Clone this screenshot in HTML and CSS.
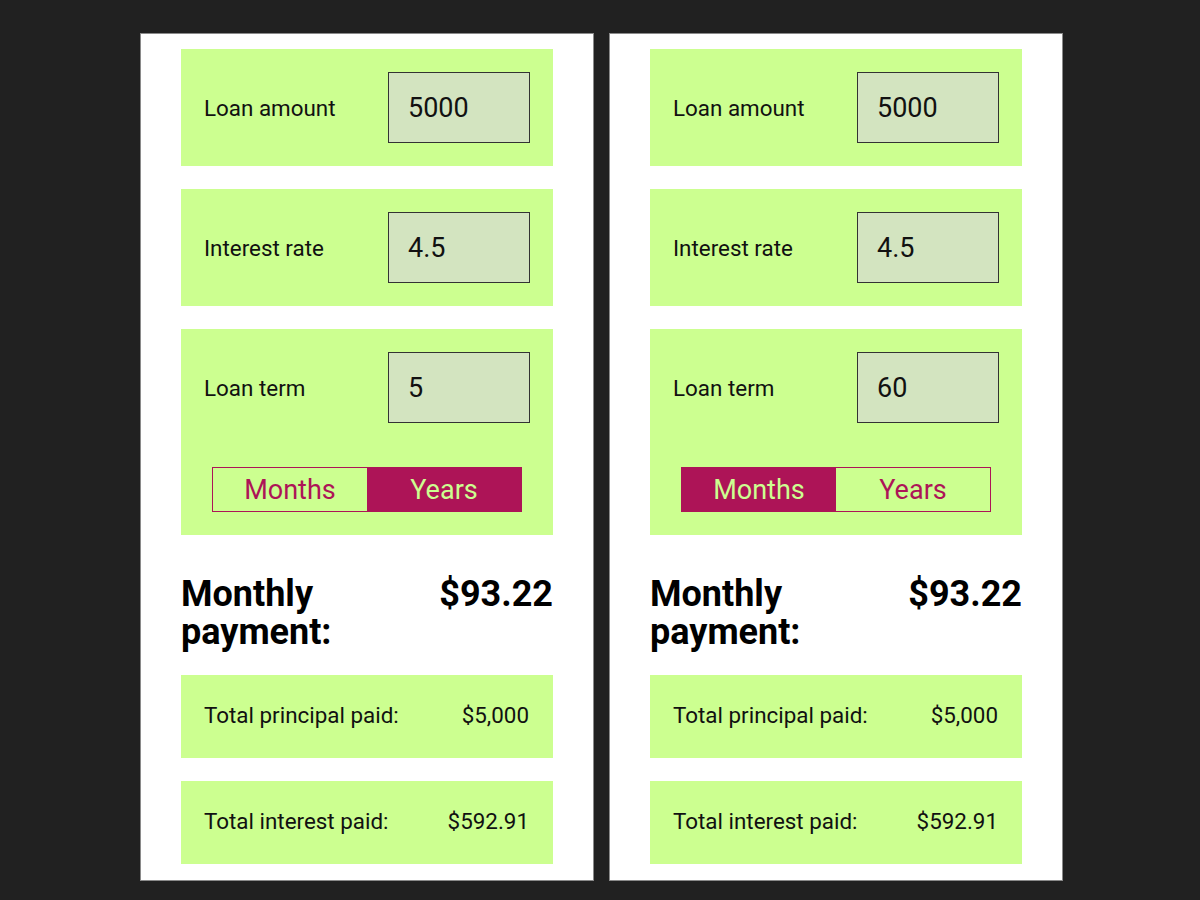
FILE: index.html
```html
<!DOCTYPE html>
<html lang="en">
<head>
  <meta charset="UTF-8">
  <title>Loan Calculator</title>
  <link rel="stylesheet" href="styles.css">
</head>
<body>

<div class="screens">

  <div class="calculator">
    <div class="field-card">
      <div class="field-row">
        <label for="amount1">Loan amount</label>
        <input id="amount1" type="text" value="5000">
      </div>
    </div>
    <div class="field-card">
      <div class="field-row">
        <label for="rate1">Interest rate</label>
        <input id="rate1" type="text" value="4.5">
      </div>
    </div>
    <div class="field-card">
      <div class="field-row">
        <label for="term1">Loan term</label>
        <input id="term1" type="text" value="5">
      </div>
      <div class="toggle">
        <button type="button">Months</button>
        <button type="button" class="active">Years</button>
      </div>
    </div>

    <div class="payment">
      <h2>Monthly payment:</h2>
      <span class="payment-value">$93.22</span>
    </div>

    <div class="result-card">
      <span>Total principal paid:</span>
      <span>$5,000</span>
    </div>
    <div class="result-card">
      <span>Total interest paid:</span>
      <span>$592.91</span>
    </div>
  </div>

  <div class="calculator">
    <div class="field-card">
      <div class="field-row">
        <label for="amount2">Loan amount</label>
        <input id="amount2" type="text" value="5000">
      </div>
    </div>
    <div class="field-card">
      <div class="field-row">
        <label for="rate2">Interest rate</label>
        <input id="rate2" type="text" value="4.5">
      </div>
    </div>
    <div class="field-card">
      <div class="field-row">
        <label for="term2">Loan term</label>
        <input id="term2" type="text" value="60">
      </div>
      <div class="toggle">
        <button type="button" class="active">Months</button>
        <button type="button">Years</button>
      </div>
    </div>

    <div class="payment">
      <h2>Monthly payment:</h2>
      <span class="payment-value">$93.22</span>
    </div>

    <div class="result-card">
      <span>Total principal paid:</span>
      <span>$5,000</span>
    </div>
    <div class="result-card">
      <span>Total interest paid:</span>
      <span>$592.91</span>
    </div>
  </div>

</div>

</body>
</html>
```

FILE: styles.css
```css
body {
  margin: 0;
  background: #212121;
  font-family: Roboto, "Noto Sans", sans-serif;
  color: #111;
}

.screens {
  display: flex;
  gap: 15px;
  padding: 33px 0 0 140px;
}

.calculator {
  width: 454px;
  height: 848px;
  box-sizing: border-box;
  padding: 15px 40px 16px;
  background: #fff;
  border: 1px solid #8a8a8a;
  display: flex;
  flex-direction: column;
}

.field-card {
  background: #ccff90;
  padding: 23px;
  margin-bottom: 23px;
}

.field-row {
  display: flex;
  justify-content: space-between;
  align-items: center;
}

.field-row label {
  font-size: 22.4px;
}

.field-row input {
  width: 142px;
  height: 71px;
  box-sizing: border-box;
  padding: 0 19px;
  border: 1px solid #333;
  background: #d3e4c0;
  font: inherit;
  font-size: 27px;
  color: #111;
  outline: none;
}

.toggle {
  display: flex;
  width: 308px;
  margin: 44px auto 0;
  border: 1px solid #ad1457;
}

.toggle button {
  flex: 1;
  height: 43px;
  padding: 0;
  border: none;
  background: transparent;
  font: inherit;
  font-size: 27px;
  color: #ad1457;
  cursor: pointer;
}

.toggle button.active {
  background: #ad1457;
  color: #ccff90;
}

.payment {
  display: flex;
  justify-content: space-between;
  align-items: flex-start;
  margin: 17px 0 16px;
  height: 84px;
}

.payment h2 {
  margin: 0;
  font-size: 36px;
  font-weight: 700;
  line-height: 38px;
  color: #000;
}

.payment-value {
  font-size: 36px;
  font-weight: 700;
  line-height: 38px;
  color: #000;
}

.result-card {
  display: flex;
  justify-content: space-between;
  background: #ccff90;
  padding: 27px 24px 29px 23px;
  font-size: 22.4px;
  line-height: 27px;
  margin-bottom: 23px;
}

.result-card:last-child {
  margin-bottom: 0;
}
```
